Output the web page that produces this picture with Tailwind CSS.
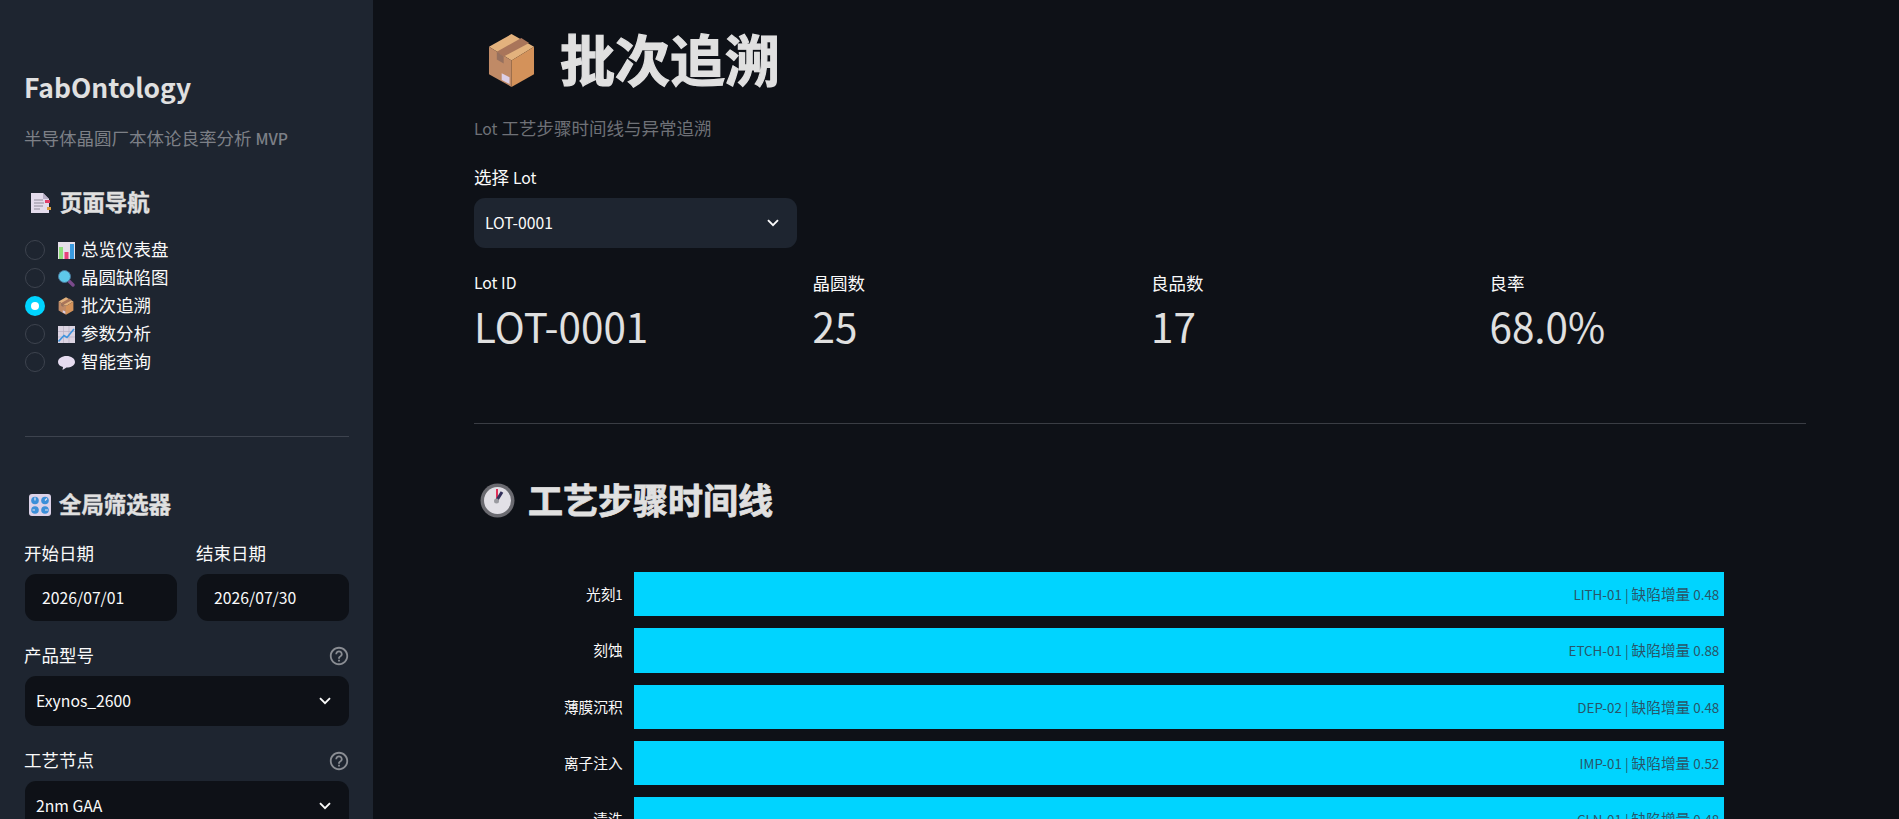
<!DOCTYPE html>
<html lang="zh-CN">
<head>
  <meta charset="UTF-8" />
  <title>批次追溯</title>
  <script src="https://cdn.jsdelivr.net/npm/@tailwindcss/browser@4"></script>
</head>
<body class="bg-[#0e1117] text-[#fafafa] font-['Noto_Sans_CJK_SC','Noto_Sans',sans-serif] overflow-hidden">
  <!-- shared emoji + control icons -->
  <svg class="hidden">
    <symbol id="box" viewBox="0 0 48 56">
      <path d="M24 1 47 14 24 28 1 14Z" fill="#e3b27d"/>
      <path d="M1 14 24 28V55L1 42Z" fill="#c08a66"/>
      <path d="M47 14 24 28V55L47 42Z" fill="#d4925a"/>
      <path d="M9 19 34 5 42 10 16 24Z" fill="#a9755a"/>
      <path d="M9 19 16 24V31L9 27Z" fill="#96705e"/>
      <path d="M14 41 22 45V52L14 48Z" fill="#dccfe6"/>
    </symbol>
    <symbol id="chevron" viewBox="0 0 12 8">
      <path d="M1 1.2 6 6.2 11 1.2" fill="none" stroke="currentColor" stroke-width="1.9"/>
    </symbol>
    <symbol id="help" viewBox="0 0 24 24">
      <path fill="currentColor" d="M11 18h2v-2h-2v2zm1-16C6.48 2 2 6.48 2 12s4.48 10 10 10 10-4.48 10-10S17.52 2 12 2zm0 18c-4.41 0-8-3.59-8-8s3.59-8 8-8 8 3.59 8 8-3.59 8-8 8zm0-14c-2.21 0-4 1.79-4 4h2c0-1.1.9-2 2-2s2 .9 2 2c0 2-3 1.75-3 5h2c0-2.25 3-2.5 3-5 0-2.21-1.79-4-4-4z"/>
    </symbol>
  </svg>

  <div class="flex h-[819px] w-[1899px]">
    <!-- Sidebar -->
    <aside class="w-[373px] shrink-0 h-full overflow-hidden bg-[#1e2530] pl-[25px] pr-[24px] pt-[68px]">
      <div class="h-[40px] flex items-center text-[26.4px] font-semibold text-[#e0e0e0]"><span class="mb-[2px] -ml-px">FabOntology</span></div>
      <div class="h-[26px] mt-[18px] flex items-center text-[17.5px] text-[#7d8087] whitespace-nowrap"><span class="mb-[2px] -ml-px">半导体晶圆厂本体论良率分析 <span class="text-[15.75px] font-medium">MVP</span></span></div>

      <div class="h-[30px] mt-[36px] flex items-center text-[22.4px] font-bold text-[#e0e0e0]">
        <svg class="w-[21px] h-[22px] ml-[5px] mr-[9px]" viewBox="0 0 21 22">
          <path d="M1 1H13L19 7V21H1Z" fill="#e4dcec"/>
          <path d="M13 1 19 7H13Z" fill="#b9afc6"/>
          <path d="M4 8H13M4 11H14M4 14H13M4 17H10" stroke="#8e8a98" stroke-width="1"/>
          <rect x="15" y="8" width="5" height="3" fill="#e0406a"/>
          <rect x="17" y="15" width="4" height="3" fill="#e0a040"/>
        </svg>
        <span class="mb-[3px] [-webkit-text-stroke:0.4px_#e0e0e0]">页面导航</span>
      </div>

      <ul class="mt-[18px] text-[17.5px]">
        <li class="h-[28px] flex items-center">
          <span class="w-[20px] h-[20px] rounded-full border border-[#3d434e]"></span>
          <svg class="w-[17px] h-[17px] ml-[13px] mr-[6px]" viewBox="0 0 17 17">
            <rect width="17" height="17" fill="#e6dfe9"/>
            <rect x="1" y="5" width="4" height="12" fill="#8fdc7a"/>
            <rect x="6.5" y="10" width="4" height="7" fill="#e8407a"/>
            <rect x="12" y="2" width="4" height="15" fill="#3a9be0"/>
          </svg>
          <span class="mb-[2px]">总览仪表盘</span>
        </li>
        <li class="h-[28px] flex items-center">
          <span class="w-[20px] h-[20px] rounded-full border border-[#3d434e]"></span>
          <svg class="w-[17px] h-[17px] ml-[13px] mr-[6px]" viewBox="0 0 17 17">
            <path d="M10 10 15 15" stroke="#7b4a8c" stroke-width="3.4" stroke-linecap="round"/>
            <circle cx="6.5" cy="6.5" r="6" fill="#5ec9ea" stroke="#4a7a9c" stroke-width="1"/>
          </svg>
          <span class="mb-[2px]">晶圆缺陷图</span>
        </li>
        <li class="h-[28px] flex items-center">
          <span class="w-[20px] h-[20px] rounded-full bg-[#00d4ff] flex items-center justify-center"><span class="w-[8px] h-[8px] rounded-full bg-white"></span></span>
          <svg class="w-[16px] h-[18px] ml-[13px] mr-[7px]"><use href="#box"/></svg>
          <span class="mb-[2px]">批次追溯</span>
        </li>
        <li class="h-[28px] flex items-center">
          <span class="w-[20px] h-[20px] rounded-full border border-[#3d434e]"></span>
          <svg class="w-[17px] h-[17px] ml-[13px] mr-[6px]" viewBox="0 0 17 17">
            <rect width="17" height="17" fill="#dcd4e2"/>
            <path d="M0 5.5H17M0 11H17M5.5 0V17M11 0V17" stroke="#b9b0c4" stroke-width=".7"/>
            <path d="M.5 15.5 6 9.5 9 11.5 16 3" fill="none" stroke="#3f94de" stroke-width="1.6"/>
          </svg>
          <span class="mb-[2px]">参数分析</span>
        </li>
        <li class="h-[28px] flex items-center">
          <span class="w-[20px] h-[20px] rounded-full border border-[#3d434e]"></span>
          <svg class="w-[17px] h-[17px] ml-[13px] mr-[6px]" viewBox="0 0 17 17">
            <path d="M8.5 2C13 2 17 4.5 17 8S13 13.5 8.5 13.5L4.5 16 5 13C2 12.5 0 10.5 0 8 0 4.5 4 2 8.5 2Z" fill="#e6dcf0"/>
          </svg>
          <span class="mb-[2px]">智能查询</span>
        </li>
      </ul>

      <hr class="mt-[60px] h-px border-0 bg-[#3d434e]" />

      <div class="h-[30px] mt-[53px] flex items-center text-[22.4px] font-bold text-[#e0e0e0]">
        <svg class="w-[22px] h-[22px] ml-[4px] mr-[8px]" viewBox="0 0 22 22">
          <rect width="22" height="22" rx="3" fill="#dcd2e8"/>
          <circle cx="6" cy="6.5" r="3.8" fill="#3b8fd8"/><circle cx="16" cy="6.5" r="3.8" fill="#3b8fd8"/>
          <circle cx="6" cy="16" r="3.8" fill="#3b8fd8"/><circle cx="16" cy="16" r="3.8" fill="#3b8fd8"/>
          <path d="M6 6.5V3.5M16 6.5 18 4.5M6 16 3.5 16M16 16H19" stroke="#e8e4f0" stroke-width="1.2"/>
        </svg>
        <span class="mb-[2px] [-webkit-text-stroke:0.4px_#e0e0e0]">全局筛选器</span>
      </div>

      <div class="mt-[21px] grid grid-cols-2 gap-x-[20px]">
        <div>
          <div class="h-[24px] flex items-center text-[17.5px]"><span class="-ml-px">开始日期</span></div>
          <div class="mt-[9px] h-[47px] rounded-[11px] bg-[#0e1117] pl-[17px] flex items-center text-[15.75px]">2026/07/01</div>
        </div>
        <div>
          <div class="h-[24px] flex items-center text-[17.5px]"><span class="-ml-px">结束日期</span></div>
          <div class="mt-[9px] h-[47px] rounded-[11px] bg-[#0e1117] pl-[17px] flex items-center text-[15.75px]">2026/07/30</div>
        </div>
      </div>

      <div class="mt-[23px] h-[24px] flex items-center justify-between text-[17.5px]">
        <span class="mb-[2px] -ml-px">产品型号</span>
        <svg class="w-[22px] h-[22px] -mr-px text-[#8a8d93]"><use href="#help"/></svg>
      </div>
      <div class="mt-[8px] h-[50px] rounded-[11px] bg-[#0e1117] pl-[11px] pr-[18px] flex items-center justify-between text-[15.75px]">
        Exynos_2600
        <svg class="w-[12px] h-[8px]"><use href="#chevron"/></svg>
      </div>

      <div class="mt-[23px] h-[24px] flex items-center justify-between text-[17.5px]">
        <span class="mb-[2px] -ml-px">工艺节点</span>
        <svg class="w-[22px] h-[22px] -mr-px text-[#8a8d93]"><use href="#help"/></svg>
      </div>
      <div class="mt-[8px] h-[50px] rounded-[11px] bg-[#0e1117] pl-[11px] pr-[18px] flex items-center justify-between text-[15.75px]">
        2nm GAA
        <svg class="w-[12px] h-[8px]"><use href="#chevron"/></svg>
      </div>
    </aside>

    <!-- Main -->
    <main class="flex-1 h-full overflow-hidden pl-[101px] pt-[28px]">
      <div class="w-[1332px]">
        <h1 class="h-[64px] flex items-center text-[55px] font-bold text-[#e0e0e0]">
          <svg class="w-[47px] h-[55px] ml-[14px] mr-[25px]"><use href="#box"/></svg>
          <span class="mb-[5px] [-webkit-text-stroke:1.2px_#e0e0e0]">批次追溯</span>
        </h1>
        <p class="h-[26px] mt-[24px] flex items-center text-[17.5px] text-[#6f7177]"><span class="mb-[2px]"><span class="text-[15.75px]">Lot</span> 工艺步骤时间线与异常追溯</span></p>

        <div class="h-[24px] mt-[24px] flex items-center text-[17.5px]"><span class="mb-[2px]">选择 <span class="text-[15.75px]">Lot</span></span></div>
        <div class="mt-[8px] w-[323px] h-[50px] rounded-[11px] bg-[#1e2530] pl-[11px] pr-[18px] flex items-center justify-between text-[15.75px]">
          LOT-0001
          <svg class="w-[12px] h-[8px]"><use href="#chevron"/></svg>
        </div>

        <div class="mt-[24px] grid grid-cols-4 gap-x-[22px]">
          <div>
            <div class="h-[24px] flex items-center text-[15.75px]"><span class="mb-[2px]">Lot ID</span></div>
            <div class="h-[56px] mt-[4px] flex items-center text-[40.4px] font-normal text-[#e0e0e0]"><span class="mb-[4px]">LOT-0001</span></div>
          </div>
          <div>
            <div class="h-[24px] flex items-center text-[17.5px]"><span class="mb-[2px]">晶圆数</span></div>
            <div class="h-[56px] mt-[4px] flex items-center text-[40.4px] font-normal text-[#e0e0e0]"><span class="mb-[4px]">25</span></div>
          </div>
          <div>
            <div class="h-[24px] flex items-center text-[17.5px]"><span class="mb-[2px]">良品数</span></div>
            <div class="h-[56px] mt-[4px] flex items-center text-[40.4px] font-normal text-[#e0e0e0]"><span class="mb-[4px]">17</span></div>
          </div>
          <div>
            <div class="h-[24px] flex items-center text-[17.5px]"><span class="mb-[2px]">良率</span></div>
            <div class="h-[56px] mt-[4px] flex items-center text-[40.4px] font-normal text-[#e0e0e0]"><span class="mb-[4px]">68.0%</span></div>
          </div>
        </div>

        <hr class="mt-[67px] h-px border-0 bg-[#3a3d44]" />

        <h2 class="h-[44px] mt-[54px] flex items-center text-[35px] font-bold text-[#e0e0e0]">
          <svg class="w-[35px] h-[35px] ml-[6px] mr-[13px]" viewBox="0 0 35 35">
            <circle cx="17.5" cy="17.5" r="17" fill="#6a6a70"/>
            <circle cx="17.5" cy="17.5" r="13.5" fill="#e2e0e6"/>
            <path d="M17 6V17" stroke="#e0305a" stroke-width="2"/>
            <path d="M17 17 22 9" stroke="#33305a" stroke-width="3"/>
            <circle cx="16.5" cy="18" r="2.5" fill="#9a9aa0"/>
          </svg>
          <span class="mb-[2px] [-webkit-text-stroke:0.8px_#e0e0e0]">工艺步骤时间线</span>
        </h2>

        <!-- timeline chart -->
        <div class="mt-[50px] flex flex-col gap-y-[12px] w-[1250px] text-[14.7px]">
          <div class="flex items-center">
            <span class="w-[148.7px] text-right">光刻<span class="text-[13.2px]">1</span></span>
            <div class="ml-[11.3px] w-[1090px] h-[44.25px] bg-[#00d4ff] flex items-center justify-end pr-[4.7px] text-[#28566a]"><span class="text-[13.4px]">LITH-01 |&nbsp;</span>缺陷增量<span class="text-[13.4px]">&nbsp;0.48</span></div>
          </div>
          <div class="flex items-center">
            <span class="w-[148.7px] text-right">刻蚀</span>
            <div class="ml-[11.3px] w-[1090px] h-[44.25px] bg-[#00d4ff] flex items-center justify-end pr-[4.7px] text-[#28566a]"><span class="text-[13.4px]">ETCH-01 |&nbsp;</span>缺陷增量<span class="text-[13.4px]">&nbsp;0.88</span></div>
          </div>
          <div class="flex items-center">
            <span class="w-[148.7px] text-right">薄膜沉积</span>
            <div class="ml-[11.3px] w-[1090px] h-[44.25px] bg-[#00d4ff] flex items-center justify-end pr-[4.7px] text-[#28566a]"><span class="text-[13.4px]">DEP-02 |&nbsp;</span>缺陷增量<span class="text-[13.4px]">&nbsp;0.48</span></div>
          </div>
          <div class="flex items-center">
            <span class="w-[148.7px] text-right">离子注入</span>
            <div class="ml-[11.3px] w-[1090px] h-[44.25px] bg-[#00d4ff] flex items-center justify-end pr-[4.7px] text-[#28566a]"><span class="text-[13.4px]">IMP-01 |&nbsp;</span>缺陷增量<span class="text-[13.4px]">&nbsp;0.52</span></div>
          </div>
          <div class="flex items-center">
            <span class="w-[148.7px] text-right">清洗</span>
            <div class="ml-[11.3px] w-[1090px] h-[44.25px] bg-[#00d4ff] flex items-center justify-end pr-[4.7px] text-[#28566a]"><span class="text-[13.4px]">CLN-01 |&nbsp;</span>缺陷增量<span class="text-[13.4px]">&nbsp;0.48</span></div>
          </div>
        </div>
      </div>
    </main>
  </div>
</body>
</html>
